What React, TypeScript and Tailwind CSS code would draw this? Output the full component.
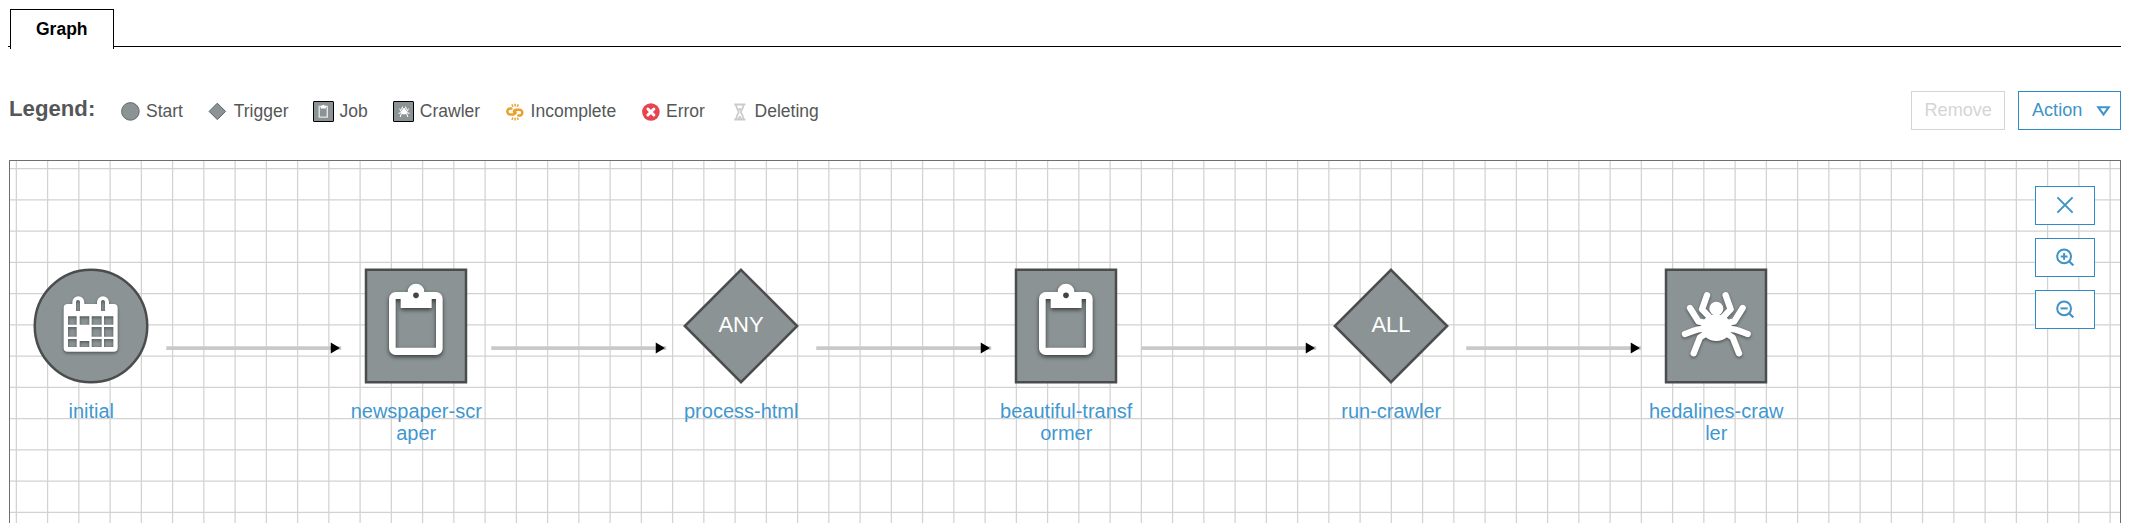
import React from "react";

type Kind = "start" | "job" | "any" | "all" | "crawler";

const NODES: { kind: Kind; lines: string[] }[] = [
  { kind: "start", lines: ["initial"] },
  { kind: "job", lines: ["newspaper-scr", "aper"] },
  { kind: "any", lines: ["process-html"] },
  { kind: "job", lines: ["beautiful-transf", "ormer"] },
  { kind: "all", lines: ["run-crawler"] },
  { kind: "crawler", lines: ["hedalines-craw", "ler"] },
];

const FIRST_X = 81.25;
const STEP_X = 325;

const rect = (x1: number, y1: number, x2: number, y2: number) => `M${x1} ${y1}H${x2}V${y2}H${x1}Z`;

/* Glyphs are drawn on a grid three units to the pixel, centred on 0,0. */
function CalendarGlyph() {
  const cols = [[-69, -43], [-34, -5], [2, 32], [39, 67]];
  const rows = [[-29, -4], [3, 32], [39, 63]];
  let cells = "";
  rows.forEach(([y1, y2], r) =>
    cols.forEach(([x1, x2], c) => {
      if (r === 1 && c === 1) return;
      cells += rect(x1, r === 2 && c === 1 ? y1 + 6 : y1, x2, y2);
    })
  );
  return (
    <path
      fill="#fff"
      fillRule="evenodd"
      d={
        "M-56 -66V-71A18 18 0 0 1 -20 -71V-66H18V-71A18 18 0 0 1 54 -71V-66H68A12 12 0 0 1 80 -54V65A12 12 0 0 1 68 77H-70A12 12 0 0 1 -82 65V-54A12 12 0 0 1 -70 -66Z" +
        "M-45 -45V-72A6 6 0 0 1 -33 -72V-45ZM30 -45V-72A6 6 0 0 1 42 -72V-45Z" +
        cells
      }
    />
  );
}

function ClipboardGlyph() {
  return (
    <>
      <path
        fill="#fff"
        fillRule="evenodd"
        d="M-61 -102H-25A25 25 0 0 1 25 -102H60A20 20 0 0 1 80 -82V67A20 20 0 0 1 60 87H-61A20 20 0 0 1 -81 67V-82A20 20 0 0 1 -61 -102ZM-61 -81V65H60V-81H47V-54H-46V-81Z"
      />
      <circle cx="0" cy="-92" r="8.5" fill="#444" />
    </>
  );
}

function SpiderGlyph() {
  const half = (
    <g fill="none" stroke="#fff" strokeWidth="19" strokeLinecap="round" strokeLinejoin="round">
      <path d="M-28 -92L-43 -50L-16 -22" />
      <path d="M-79 -54L-54 -14L-20 -6" />
      <path d="M-94 24C-76 18 -64 8 -30 8" />
      <path d="M-68 82L-49 34L-20 16" />
    </g>
  );
  return (
    <g transform="translate(1 0)">
      {half}
      <g transform="scale(-1 1)">{half}</g>
      <circle cx="0" cy="-52" r="21" fill="#fff" />
      <ellipse cx="0" cy="5" rx="46" ry="40" fill="#fff" />
    </g>
  );
}

function NodeShape({ kind }: { kind: Kind }) {
  const paint = { fill: "#8b9394", stroke: "#4a4c4d", strokeWidth: 2.5 };
  const diamond = kind === "any" || kind === "all";
  return (
    <svg viewBox="-60 -60 120 120" className="h-[120px] w-[120px] shrink-0 overflow-visible">
      {kind === "start" && <circle r="56.25" {...paint} />}
      {(kind === "job" || kind === "crawler") && <rect x="-50" y="-56.25" width="100" height="112.5" {...paint} />}
      {diamond && <path d="M0 -56.2L56.2 0L0 56.2L-56.2 0Z" {...paint} />}
      {diamond ? (
        <text y="6" textAnchor="middle" className="fill-white text-[22px]">
          {kind === "any" ? "ANY" : "ALL"}
        </text>
      ) : (
        <g
          transform="scale(.3333)"
          className={
            kind === "job"
              ? "[filter:drop-shadow(0_6px_6px_rgba(0,0,0,.6))]"
              : "[filter:drop-shadow(0_4px_4px_rgba(0,0,0,.45))]"
          }
        >
          {kind === "start" && <CalendarGlyph />}
          {kind === "job" && <ClipboardGlyph />}
          {kind === "crawler" && <SpiderGlyph />}
        </g>
      )}
    </svg>
  );
}

function LegendItem({ width, slot, label, children }: { width: string; slot: string; label: string; children: React.ReactNode }) {
  return (
    <div className={`flex h-[21px] shrink-0 ${width}`}>
      <div className={`flex h-[21px] shrink-0 items-center ${slot}`}>{children}</div>
      <span className="text-[17.5px] leading-5 text-[#545758]">{label}</span>
    </div>
  );
}

function Legend() {
  return (
    <div className="flex">
      <h2 className="-mt-px w-[112px] text-[22.2px] leading-5 font-bold text-[#545758]">Legend:</h2>
      <div className="flex pt-px">
        <LegendItem width="w-[87px]" slot="w-[25px]" label="Start">
          <svg viewBox="0 0 19 19" className="size-[19px]">
            <circle cx="9.4" cy="9.4" r="8.8" fill="#8b9394" stroke="#666a6b" />
          </svg>
        </LegendItem>
        <LegendItem width="w-[105px]" slot="w-[25.7px]" label="Trigger">
          <svg viewBox="0 0 19 19" className="size-[19px]">
            <path d="M9.3 1.2L17.5 9.4L9.3 17.6L1.1 9.4Z" fill="#8b9394" stroke="#5c6061" />
          </svg>
        </LegendItem>
        <LegendItem width="w-[80px]" slot="w-[26.6px]" label="Job">
          <div className="flex size-[21px] items-center justify-center rounded-[1px] border border-black bg-[#8b9394]">
            <svg viewBox="0 0 19 19" className="size-[19px]">
              <path d="M5.2 4.4H13.3V15.1H5.2Z" fill="none" stroke="#e3e5e5" strokeWidth="1.4" />
              <path d="M6.7 3.8H8.2A1.1 1.1 0 0 1 10.4 3.8H11.9V6.4H6.7Z" fill="#fff" />
            </svg>
          </div>
        </LegendItem>
        <LegendItem width="w-[113px]" slot="w-[26.8px]" label="Crawler">
          <div className="flex size-[21px] items-center justify-center rounded-[1px] border border-black bg-[#8b9394]">
            <svg viewBox="-110 -110 220 220" className="size-[12px] overflow-visible">
              <SpiderGlyph />
            </svg>
          </div>
        </LegendItem>
        <LegendItem width="w-[135.5px]" slot="w-[24.6px]" label="Incomplete">
          <svg viewBox="0 0 18 18" className="size-[18px]" fill="none" stroke="#e9a02c">
            <g strokeWidth="2.5" strokeLinecap="round" strokeLinejoin="round">
              <path d="M5.4 5.6H4.2A2.6 2.6 0 0 0 4.2 11.4H7.4C9.4 11.4 10.2 9.6 9 8.2" />
              <path d="M12.4 12.6H13.4A2.8 2.8 0 0 0 13.4 6.8H10.4C8.2 6.6 7.2 8.4 8.4 9.8" />
            </g>
            <g strokeWidth="1.5">
              <path d="M9.1 .8V3.4M5.9 1.4L7 3.7M12.3 1.4L11.2 3.7M9.1 14.8V17.4M5.9 16.8L7 14.6M12.3 16.8L11.2 14.6" />
            </g>
          </svg>
        </LegendItem>
        <LegendItem width="w-[92.5px]" slot="w-[24.5px]" label="Error">
          <svg viewBox="0 0 18 18" className="size-[18px]">
            <circle cx="8.9" cy="9" r="8.8" fill="#e64550" />
            <path d="M5.9 6L11.9 12M11.9 6L5.9 12" stroke="#fff" strokeWidth="3" strokeLinecap="round" />
          </svg>
        </LegendItem>
        <LegendItem width="w-[90px]" slot="w-[20.6px]" label="Deleting">
          <svg viewBox="0 0 12 18" className="h-[18px] w-[12px]" fill="none" stroke="#cbcbcb">
            <path d="M.2 1.4H11.4M.2 16.6H11.4" strokeWidth="2" />
            <path d="M2.2 2C2.2 6 4.7 7.4 4.7 9S2.2 12 2.2 16M9.4 2C9.4 6 6.9 7.4 6.9 9S9.4 12 9.4 16" strokeWidth="1.7" />
            <path d="M3.6 5.2H8L5.8 8ZM3 15.8L5.8 12.6L8.6 15.8Z" fill="#cbcbcb" stroke="none" />
          </svg>
        </LegendItem>
      </div>
    </div>
  );
}

function Controls() {
  const box = "flex h-[39px] w-[60px] items-center justify-center border border-[#2f8ac6] bg-white";
  return (
    <div className="absolute top-[25px] right-[25px] flex flex-col gap-[13px]">
      <button className={box}>
        <svg viewBox="0 0 18 18" className="-mt-px size-[18px]" stroke="#3f93c8" strokeWidth="2">
          <path d="M1.4 1.4L16.6 16.6M16.6 1.4L1.4 16.6" />
        </svg>
      </button>
      {["M8.1 5V11.8M4.7 8.4H11.5", "M4.5 8.4H11.7"].map((sign) => (
        <button key={sign} className={box}>
          <svg viewBox="0 0 18 18" className="-mt-px size-[18px]" fill="none" stroke="#3f93c8">
            <circle cx="8.1" cy="8.4" r="6.9" strokeWidth="2" />
            <path d={sign} strokeWidth="2" />
            <path d="M13 13.2L17.4 17.4" strokeWidth="2.2" />
          </svg>
        </button>
      ))}
    </div>
  );
}

export default function App() {
  return (
    <div className="flex h-[523px] w-[2136px] flex-col overflow-hidden bg-white font-['Liberation_Sans',Arial,sans-serif]">
      <div className="flex h-[49px] shrink-0 items-start pt-[9px] pl-2">
        <div className="mt-[37px] h-px w-[2px] bg-black" />
        <div className="h-10 w-[104px] border border-b-0 border-black pt-[9px] pl-[25px] text-[17.5px] leading-5 font-bold text-black">
          Graph
        </div>
        <div className="mt-[37px] h-px w-[2007px] bg-black" />
      </div>

      <div className="flex h-[111px] shrink-0 justify-between pr-[15px] pl-[9px]">
        <div className="pt-[51px]">
          <Legend />
        </div>
        <div className="flex gap-[13px] pt-[42px] text-[18.1px] leading-5">
          <button className="flex h-[39px] w-[94px] border border-[#d5d5d5] pt-2 pl-[12.5px] text-[#d5d5d5]">Remove</button>
          <button className="flex h-[39px] w-[103px] border border-[#2f8ac6] pt-2 pl-[13px] text-[#3f93c8]">
            Action
            <svg viewBox="0 0 13 10" className="mt-[6px] ml-auto mr-[10px] h-[10px] w-[13px] overflow-visible">
              <path d="M1.3 1.2H11.7L6.5 8.5Z" fill="none" stroke="#3f93c8" strokeWidth="2.1" />
            </svg>
          </button>
        </div>
      </div>

      <div className="relative ml-[9px] h-[370px] w-[2112px] shrink-0 border border-[#6f6f6f]">
        <svg className="absolute inset-0 h-full w-full">
          <g stroke="#d2d2d2" strokeWidth="1.25">
            {Array.from({ length: 68 }, (_, i) => (
              <path key={`v${i}`} d={`M${6.35 + i * 31.25} 0V370`} />
            ))}
            {Array.from({ length: 12 }, (_, i) => (
              <path key={`h${i}`} d={`M0 ${7.6 + i * 31.25}H2112`} />
            ))}
          </g>
          {NODES.slice(1).map((_, i) => {
            const x = FIRST_X + i * STEP_X + 75;
            return (
              <g key={i}>
                <path d={`M${x} 187H${x + 175}`} stroke="#c9c9c9" strokeWidth="3.75" />
                <path d={`M${x + 164.5} 181.4L${x + 173.7} 187L${x + 164.5} 192.6Z`} fill="#000" />
              </g>
            );
          })}
        </svg>
        {NODES.map((node, i) => (
          <div
            key={i}
            className="absolute top-[104.8px] flex w-[160px] flex-col items-center"
            style={{ left: FIRST_X + i * STEP_X - 80 }}
          >
            <NodeShape kind={node.kind} />
            <div className="mt-[14px] text-center text-[20px] leading-[22px] text-[#3f97d0]">
              {node.lines.map((line) => (
                <div key={line}>{line}</div>
              ))}
            </div>
          </div>
        ))}
        <Controls />
      </div>
    </div>
  );
}
